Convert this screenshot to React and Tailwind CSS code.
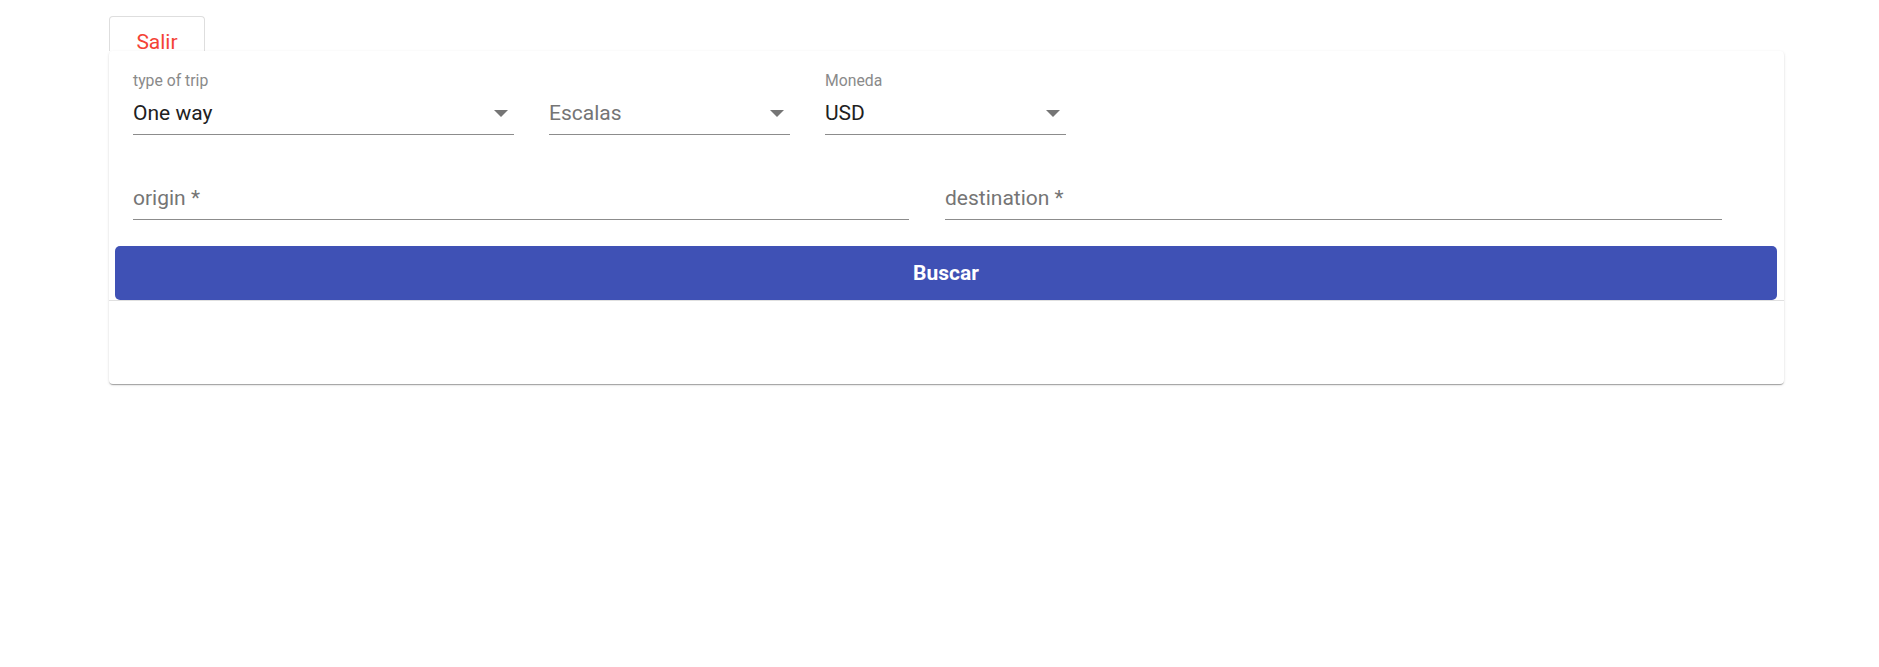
import React from "react"

function Arrow() {
  return (
    <svg width="14" height="7" viewBox="0 0 14 7" className="mr-[6px] shrink-0">
      <path d="M0 0 L14 0 L7 7 Z" fill="#757575" />
    </svg>
  )
}

function SelectField({ label, value, placeholder, width }) {
  return (
    <div className={`flex flex-col ${width}`}>
      <div className="h-[16px] text-[15.75px] leading-none text-[#8a8a8a]">{label}</div>
      <div className="flex items-center justify-between pt-[14px] pb-[10px] border-b border-[#8c8c8c]">
        <span className={`h-[21px] text-[21px] leading-none ${value ? "text-[#212121]" : "text-[#757575]"}`}>
          {value || placeholder}
        </span>
        <Arrow />
      </div>
    </div>
  )
}

function TextField({ placeholder, width }) {
  return (
    <div className={`flex flex-col ${width}`}>
      <div className="h-[16px]"></div>
      <div className="pt-[14px] pb-[10px] border-b border-[#8c8c8c]">
        <div className="h-[21px] text-[21px] leading-none text-[#757575]">{placeholder}</div>
      </div>
    </div>
  )
}

export default function App() {
  return (
    <div className="min-h-[667px] bg-white pt-[16px] font-['Roboto','Liberation_Sans',sans-serif]">
      <div className="ml-[109px] w-[1675px]">
        {/* tab */}
        <div className="w-[96px] h-[35px] rounded-t-[4px] border border-b-0 border-[#dedede] pt-[17px] text-center">
          <span className="block text-[21px] leading-[17px] text-[#f44336]">Salir</span>
        </div>

        {/* card */}
        <div className="rounded-[4px] bg-white shadow-[0_2px_1px_-1px_rgba(0,0,0,0.2),0_1px_1px_0_rgba(0,0,0,0.14),0_1px_3px_0_rgba(0,0,0,0.12)]">
          <div className="px-[24px] pt-[22px]">
            <div className="flex gap-[35px]">
              <SelectField label="type of trip" value="One way" width="w-[381px]" />
              <SelectField label="" placeholder="Escalas" width="w-[241px]" />
              <SelectField label="Moneda" value="USD" width="w-[241px]" />
            </div>
            <div className="flex gap-[36px] mt-[23px]">
              <TextField placeholder="origin *" width="w-[776px]" />
              <TextField placeholder="destination *" width="w-[777px]" />
            </div>
          </div>
          <div className="mt-[26px] ml-[6px] mr-[7px]">
            <button className="w-full h-[54px] rounded-[5px] bg-[#3f51b5] text-white text-[21px] font-bold leading-none">
              Buscar
            </button>
          </div>
          <div className="h-[84px] border-t border-[#e0e0e0]"></div>
        </div>
      </div>
    </div>
  )
}
